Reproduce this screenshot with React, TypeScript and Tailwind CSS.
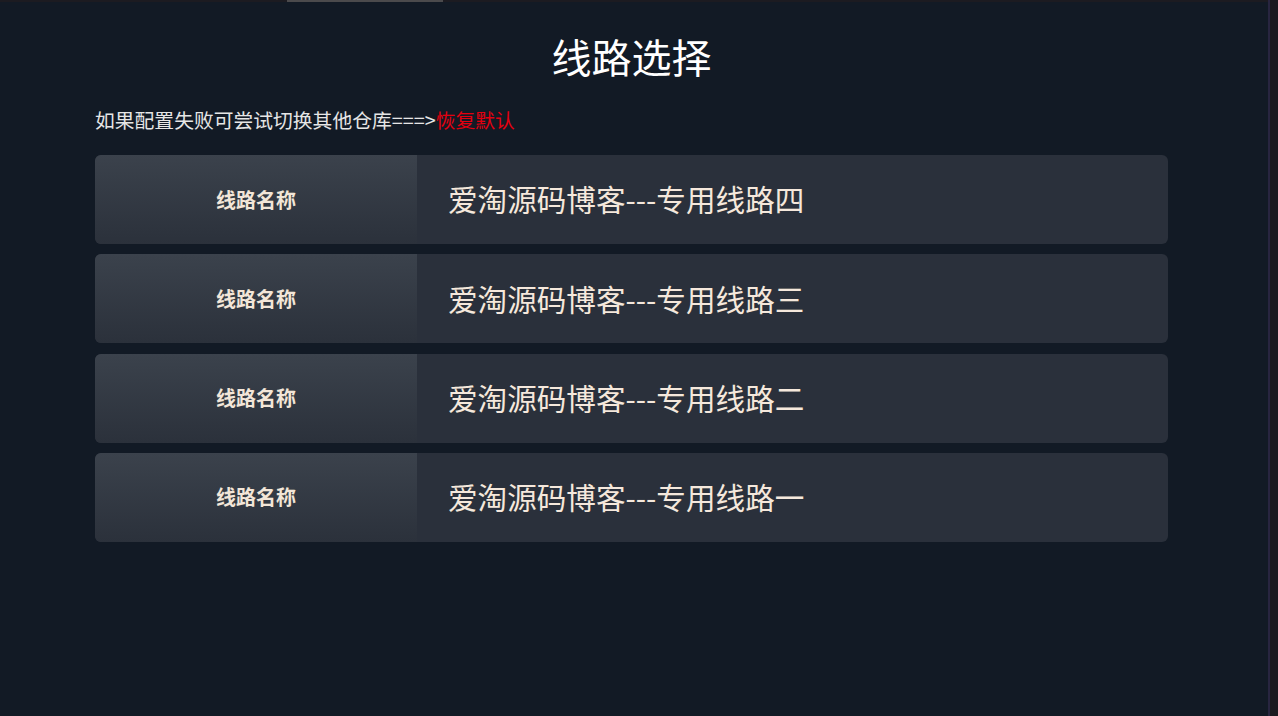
const lines = ["爱淘源码博客---专用线路四", "爱淘源码博客---专用线路三", "爱淘源码博客---专用线路二", "爱淘源码博客---专用线路一"];

export default function App() {
  return (
    <div
      className="flex h-[716px] w-[1278px] overflow-hidden bg-[#121a25]"
      style={{ fontFamily: '"Noto Sans CJK SC", "Noto Sans", sans-serif' }}
    >
      <div className="flex flex-1 flex-col">
        {/* top strip */}
        <div className="flex h-[2px] bg-[#1c1b21]">
          <div className="ml-[287px] w-[156px] bg-[#4b4a4c]" />
        </div>

        <main className="flex flex-col pl-[95px] pr-[100px]">
          <h1 className="mt-[26px] text-center text-[40px] leading-[56px] text-white">线路选择</h1>

          <p className="mt-[22px] text-[19.8px] leading-[28px] text-[#e6e6e6]">
            如果配置失败可尝试切换其他仓库===&gt;<span className="text-[#e4000f]">恢复默认</span>
          </p>

          <div className="mt-[21px] flex w-[1073px] flex-col gap-[10.3px]">
            {lines.map((line) => (
              <div key={line} className="flex h-[89px] overflow-hidden rounded-[6px] bg-[#2a303b]">
                <div className="flex w-[322px] items-center justify-center bg-gradient-to-b from-[#3b424c] to-[#2b313b] text-[20px] font-bold text-[#f3e6d8]">
                  线路名称
                </div>
                <div className="flex flex-1 items-center pl-[31px] text-[29.6px] text-[#f5e8dc]">{line}</div>
              </div>
            ))}
          </div>
        </main>
      </div>

      {/* scrollbar strip */}
      <div className="flex w-[10px]">
        <div className="w-[2px] bg-[#282540]" />
        <div className="flex-1 bg-[#1b1a1f]" />
      </div>
    </div>
  );
}
